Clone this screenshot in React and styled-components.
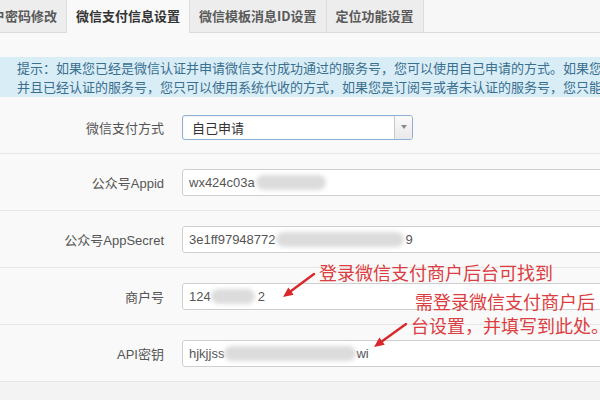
import React from "react";
import styled, { createGlobalStyle } from "styled-components";

const Global = createGlobalStyle`
  html, body { margin: 0; padding: 0; }
  body {
    background: #f3f3f3;
    font-family: "Liberation Sans", "Noto Sans CJK SC", sans-serif;
    width: 600px;
    height: 400px;
    overflow: hidden;
  }
`;

const Page = styled.div`
  width: 600px;
  height: 400px;
  overflow: hidden;
  background: #f3f3f3;
  display: flex;
  flex-direction: column;
`;

const Header = styled.div`
  background: #f9f9f9;
  flex-shrink: 0;
`;

const TabBar = styled.div`
  display: flex;
  height: 33px;
  box-sizing: border-box;
  border-bottom: 1px solid #dcdcdc;
  background: #f7f7f7;
`;

const Tab = styled.div`
  box-sizing: border-box;
  height: ${(p) => (p.$active ? "33px" : "32px")};
  line-height: 32px;
  padding: 0 9px;
  margin-left: ${(p) => (p.$first ? "-31px" : "-1px")};
  border: 1px solid #dcdcdc;
  border-top: none;
  border-bottom: none;
  background: ${(p) => (p.$active ? "#f9f9f9" : "#ededed")};
  color: ${(p) => (p.$active ? "#333" : "#5a5a5a")};
  font-family: "Noto Sans CJK SC", sans-serif;
  font-size: 13px;
  font-weight: 700;
  white-space: nowrap;
`;

const Notice = styled.div`
  margin-top: 24px;
  padding: 1px 0 1px 17px;
  background: #d9edf7;
  color: #3a6f8f;
  font-family: "Noto Sans CJK SC", sans-serif;
  font-size: 13px;
  line-height: 19px;
  overflow: hidden;
`;

const NoticeLine = styled.div`
  white-space: nowrap;
`;

const Form = styled.div`
  position: relative;
  background: #f9f9f9;
  flex-shrink: 0;
`;

const Row = styled.div`
  display: grid;
  grid-template-columns: 164px 1fr;
  column-gap: 18px;
  align-items: center;
  height: 57px;
  border-bottom: 1px solid #e6e6e6;
  padding-top: ${(p) => p.$pt || 0}px;
  box-sizing: border-box;
`;

const Label = styled.div`
  text-align: right;
  font-size: 13px;
  color: #555;
  white-space: nowrap;
`;

const Select = styled.div`
  width: 231px;
  height: 25px;
  box-sizing: border-box;
  border: 1px solid #8fb0d6;
  border-radius: 3px;
  background: #fff;
  box-shadow: inset 0 1px 2px rgba(0, 0, 0, 0.06);
  display: flex;
  align-items: stretch;
`;

const SelectValue = styled.div`
  flex: 1;
  padding-left: 9px;
  font-family: "Noto Sans CJK SC", sans-serif;
  font-size: 13px;
  color: #333;
  line-height: 23px;
`;

const SelectArrow = styled.div`
  width: 17px;
  border-left: 1px solid #c9c9c9;
  background: linear-gradient(#fafafa, #e9e9e9);
  border-radius: 0 2px 2px 0;
  display: flex;
  align-items: center;
  justify-content: center;
  &::after {
    content: "";
    border-left: 3px solid transparent;
    border-right: 3px solid transparent;
    border-top: 4px solid #8a8a8a;
  }
`;

const Field = styled.div`
  width: 600px;
  height: 27px;
  box-sizing: border-box;
  border: 1px solid #cfcfcf;
  border-radius: 3px;
  background: #fff;
  display: flex;
  align-items: center;
  padding-left: 6px;
  font-size: 13px;
  color: #555;
  white-space: nowrap;
`;

const Blur = styled.span`
  display: inline-block;
  width: ${(p) => p.$w}px;
  height: 15px;
  margin: 0 ${(p) => p.$mr || 0}px 0 ${(p) => p.$ml || 0}px;
  border-radius: 8px;
  background: ${(p) => p.$c || "#dcdcdc"};
  filter: blur(2px);
`;

const Annotation = styled.div`
  position: absolute;
  left: ${(p) => p.$x}px;
  top: ${(p) => p.$y}px;
  color: #dc3d40;
  font-family: "Noto Sans CJK SC", sans-serif;
  font-size: 18px;
  line-height: 24px;
  white-space: nowrap;
`;

const AnnLine = styled.div`
  padding-left: ${(p) => p.$indent || 0}px;
`;

const Arrows = styled.svg`
  position: absolute;
  left: 0;
  top: 0;
  pointer-events: none;
`;

function Arrow({ x1, y1, x2, y2 }) {
  const ang = Math.atan2(y2 - y1, x2 - x1);
  const len = 10;
  const w = 4.5;
  const bx = x2 - len * Math.cos(ang);
  const by = y2 - len * Math.sin(ang);
  const px = -Math.sin(ang) * w;
  const py = Math.cos(ang) * w;
  return (
    <g>
      <line x1={x1} y1={y1} x2={bx} y2={by} stroke="#d8282c" strokeWidth="2.4" strokeLinecap="round" />
      <polygon points={`${x2},${y2} ${bx + px},${by + py} ${bx - px},${by - py}`} fill="#d8282c" />
    </g>
  );
}

export default function App() {
  return (
    <>
      <Global />
      <Page>
        <Header>
          <TabBar>
            <Tab $first>用户密码修改</Tab>
            <Tab $active>微信支付信息设置</Tab>
            <Tab>微信模板消息ID设置</Tab>
            <Tab>定位功能设置</Tab>
          </TabBar>
          <Notice>
            <NoticeLine>提示：如果您已经是微信认证并申请微信支付成功通过的服务号，您可以使用自己申请的方式。如果您是</NoticeLine>
            <NoticeLine>并且已经认证的服务号，您只可以使用系统代收的方式，如果您是订阅号或者未认证的服务号，您只能使用</NoticeLine>
          </Notice>
        </Header>
        <Form>
          <Row $pt={4}>
            <Label>微信支付方式</Label>
            <Select>
              <SelectValue>自己申请</SelectValue>
              <SelectArrow />
            </Select>
          </Row>
          <Row>
            <Label>公众号Appid</Label>
            <Field>
              wx424c03a
              <Blur $w={70} $ml={1} />
            </Field>
          </Row>
          <Row>
            <Label>公众号AppSecret</Label>
            <Field>
              3e1ff97948772
              <Blur $w={128} $ml={0} $mr={2} />
              9
            </Field>
          </Row>
          <Row>
            <Label>商户号</Label>
            <Field>
              124
              <Blur $w={44} $ml={0} $mr={3} />
              2
            </Field>
          </Row>
          <Row>
            <Label>API密钥</Label>
            <Field>
              hjkjjss
              <Blur $w={132} $ml={0} $mr={0} />
              wi
            </Field>
          </Row>
          <Annotation $x={319} $y={163}>登录微信支付商户后台可找到</Annotation>
          <Annotation $x={411} $y={192}>
            <AnnLine $indent={4}>需登录微信支付商户后</AnnLine>
            <AnnLine>台设置，并填写到此处。</AnnLine>
          </Annotation>
          <Arrows width="600" height="300" viewBox="0 0 600 300">
            <Arrow x1={314} y1={177} x2={283} y2={200} />
            <Arrow x1={406} y1={227} x2={374} y2={250} />
          </Arrows>
        </Form>
      </Page>
    </>
  );
}
